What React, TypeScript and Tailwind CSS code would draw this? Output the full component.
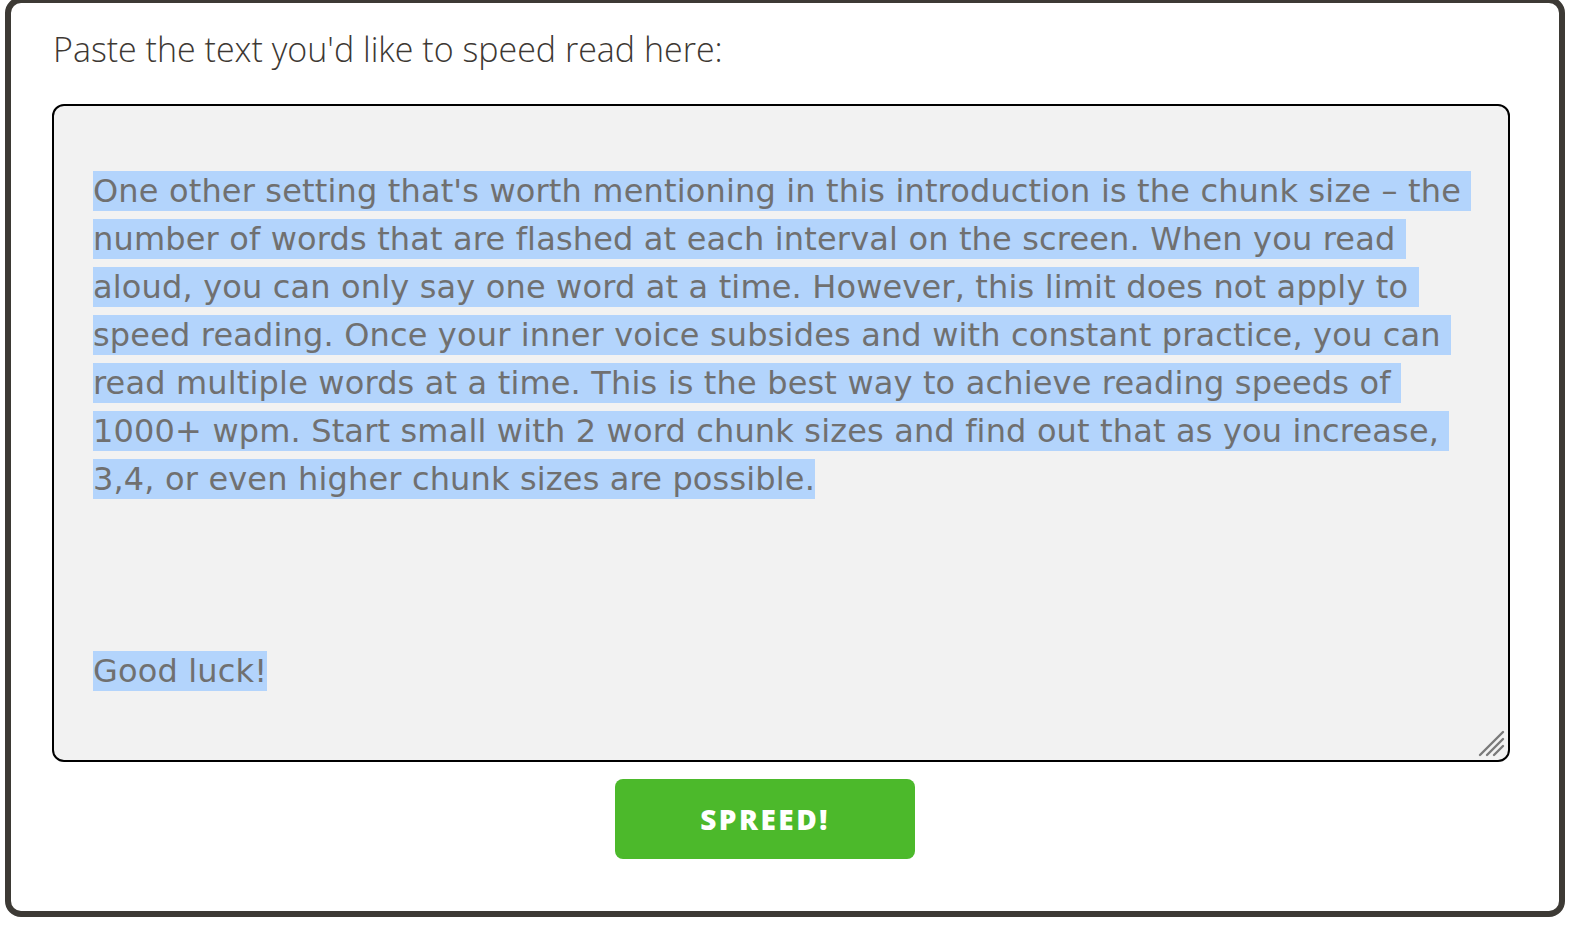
const lines = [
  "One other setting that's worth mentioning in this introduction is the chunk size \u2013 the ",
  "number of words that are flashed at each interval on the screen. When you read ",
  "aloud, you can only say one word at a time. However, this limit does not apply to ",
  "speed reading. Once your inner voice subsides and with constant practice, you can ",
  "read multiple words at a time. This is the best way to achieve reading speeds of ",
  "1000+ wpm. Start small with 2 word chunk sizes and find out that as you increase, ",
  "3,4, or even higher chunk sizes are possible.",
  "",
  "",
  "",
  "Good luck!",
];

function ResizeHandle() {
  return (
    <svg
      className="absolute right-[3px] bottom-[3px]"
      width="28"
      height="28"
      viewBox="0 0 28 28"
    >
      <path
        d="M3 26 L26 3 M10 26 L26 10 M17 26 L26 17"
        stroke="#7a7a7a"
        strokeWidth="2.4"
        strokeLinecap="round"
      />
    </svg>
  );
}

export default function App() {
  return (
    <div className="w-full h-[940px] bg-white overflow-hidden pl-[5px]">
      <div className="w-[1560px] h-[920px] -mt-[3px] border-[6px] border-[#3d3a35] rounded-[16px] bg-white pt-[29px] pl-[41px]">
        <h1 className="text-[34px] leading-none font-light text-[#3d3833] pl-[1px] font-['Open_Sans',sans-serif]">
          Paste the text you'd like to speed read here:
        </h1>

        <div className="relative mt-[38px] w-[1458px] h-[658px] border-2 border-black rounded-[12px] bg-[#f2f2f2] pt-[61px] pl-[39px]">
          <div className="text-[32px] leading-[48px] tracking-[0.16px] text-[#707070] font-['DejaVu_Sans',Verdana,sans-serif]">
            {lines.map((line, i) => (
              <div key={i} className="h-[48px] whitespace-pre">
                {line && <span className="bg-[#b3d4fc] py-[1px]">{line}</span>}
              </div>
            ))}
          </div>
          <ResizeHandle />
        </div>

        <button className="mt-[17px] ml-[563px] w-[300px] h-[80px] rounded-[8px] bg-[#4cb92b] text-white text-[28px] font-extrabold tracking-[2.5px] font-['Open_Sans',sans-serif]">
          SPREED!
        </button>
      </div>
    </div>
  );
}
